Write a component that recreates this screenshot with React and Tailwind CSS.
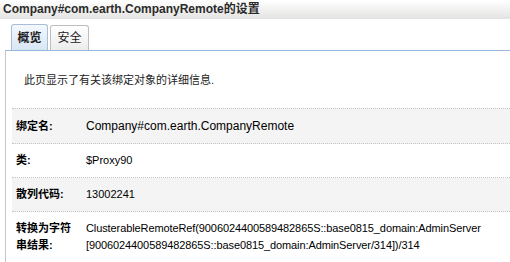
export default function App() {
  const font = { fontFamily: '"Liberation Sans", "Noto Sans CJK SC", sans-serif' };
  const rows = [
    { label: "绑定名:", value: "Company#com.earth.CompanyRemote", gray: true, h: "h-[36px]", size: "text-[12px]" },
    { label: "类:", value: "$Proxy90", gray: false, h: "h-[34px]", size: "text-[11px]" },
    { label: "散列代码:", value: "13002241", gray: true, h: "h-[34px]", size: "text-[11px]" },
  ];
  return (
    <div className="w-[510px] h-[262px] bg-white overflow-hidden text-[#000]" style={font}>
      <div className="h-[19px] bg-gradient-to-b from-white to-[#e3e4e2] px-[3px] text-[12px] font-bold leading-[19px] text-[#2b2b2b] whitespace-nowrap">
        Company#com.earth.CompanyRemote的设置
      </div>
      <div className="pl-[5px]">
        <div className="flex items-end gap-[2px] pl-[6px] pt-[5px] border-b border-[#95b8dc]">
          <div className="w-[37px] h-[26px] border border-b-0 border-[#a9bfd8] rounded-t-[3px] bg-gradient-to-b from-[#f4f8fc] to-[#d8e6f4] flex items-center justify-center text-[12px] font-bold text-[#222]">
            概览
          </div>
          <div className="w-[39px] h-[25px] border border-b-0 border-[#bdbdbd] rounded-t-[3px] bg-gradient-to-b from-white to-[#ececec] flex items-center justify-center text-[12px] text-[#222]">
            安全
          </div>
        </div>
        <div className="border-l border-[#c6c6c6] h-[212px] pl-[6px]">
          <div className="pl-[12px] pt-[21px] h-[57px] text-[11px] text-[#222] whitespace-nowrap">
            此页显示了有关该绑定对象的详细信息.
          </div>
          {rows.map((r, i) => (
            <div
              key={i}
              className={`flex items-center ${r.h} border-b border-dotted border-[#c4c4c4] ${i === 0 ? "border-t" : ""} ${r.gray ? "bg-[#f4f4f4]" : "bg-white"}`}
            >
              <div className="w-[74px] flex-none pl-[4px] text-[11px] font-bold whitespace-nowrap">{r.label}</div>
              <div className={`${r.size} whitespace-nowrap`}>{r.value}</div>
            </div>
          ))}
          <div className="flex pt-[8px]">
            <div className="w-[74px] flex-none pl-[4px] text-[11px] font-bold leading-[17px] whitespace-nowrap">
              转换为字符
              <br />
              串结果:
            </div>
            <div className="text-[11px] leading-[17px] whitespace-nowrap tracking-[-0.1px]">
              ClusterableRemoteRef(9006024400589482865S::base0815_domain:AdminServer
              <br />
              [9006024400589482865S::base0815_domain:AdminServer/314])/314
            </div>
          </div>
        </div>
      </div>
    </div>
  );
}
